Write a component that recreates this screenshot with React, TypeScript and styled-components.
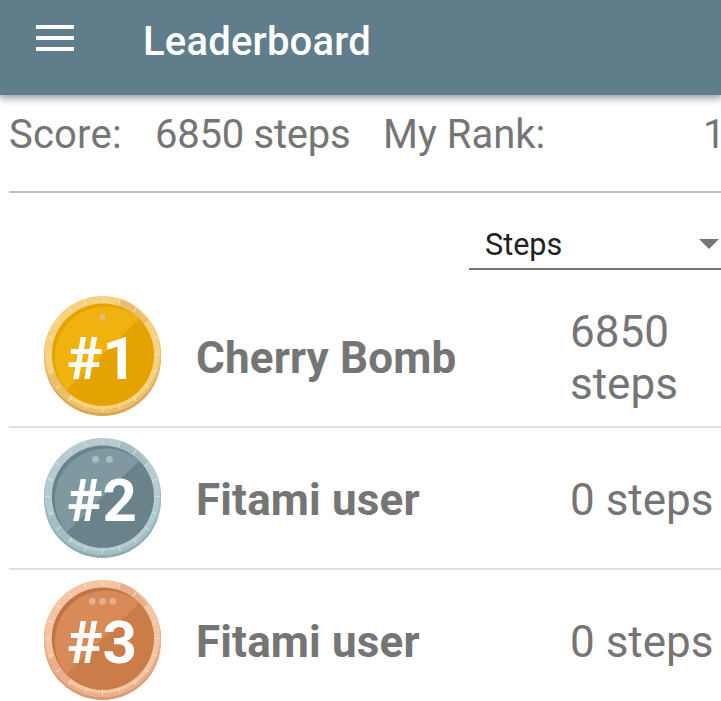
import React from "react";
import styled, { createGlobalStyle } from "styled-components";

const Global = createGlobalStyle`
  * { box-sizing: border-box; }
  html, body { margin: 0; background: #fff; overflow: hidden; }
  body { font-family: Roboto, sans-serif; color: #757575; }
`;

const Screen = styled.div`
  width: 721px;
  height: 701px;
  overflow: hidden;
  background: #fff;
`;

const AppBar = styled.header`
  display: flex;
  align-items: center;
  height: 95px;
  padding: 0 0 12px 36px;
  background: #607d8b;
  box-shadow: 0 2px 8px 1px rgba(0, 0, 0, 0.42);
`;

const MenuIcon = styled.svg`
  display: block;
  width: 38px;
  height: 26px;
  margin-top: -7px;
`;

const Title = styled.h1`
  margin: 0 0 0 69px;
  color: #fff;
  font-size: 40px;
  font-weight: 500;
  line-height: 48px;
  letter-spacing: 0.2px;
  white-space: nowrap;
`;

const Summary = styled.section`
  display: grid;
  grid-template-columns: 146px 228px 320px auto;
  height: 98px;
  margin-left: 9px;
  padding-top: 16px;
  border-bottom: 2px solid #bdbdbd;
  font-size: 40px;
  line-height: 48px;
  white-space: nowrap;
`;

const Stat = styled.span<{ $tracking?: number }>`
  letter-spacing: ${(p) => p.$tracking ?? 0}px;
`;

const FilterBar = styled.div`
  display: flex;
  justify-content: flex-end;
  height: 93px;
  padding-top: 27px;
`;

const Select = styled.div`
  display: flex;
  align-items: center;
  justify-content: space-between;
  width: 252px;
  height: 50px;
  padding: 0 2px 0 16px;
  border-bottom: 2px solid #757575;
  color: #212121;
  font-size: 32px;
`;

const SelectValue = styled.span`
  transform: scaleX(0.955);
  transform-origin: left center;
`;

const List = styled.ol`
  margin: 0 0 0 9px;
  padding: 0;
  list-style: none;
`;

const Row = styled.li`
  display: grid;
  grid-template-columns: 187px 374px 1fr;
  align-items: center;
  height: 142px;
  border-bottom: 2px solid #e0e0e0;
  font-size: 44px;
  line-height: 52px;
`;

const MedalArt = styled.svg`
  display: block;
  width: 118px;
  height: 120px;
  margin-left: 35px;
`;

const Name = styled.span`
  padding-top: 4px;
  font-weight: 700;
  letter-spacing: 0.15px;
  white-space: nowrap;
`;

const Steps = styled.span`
  padding-top: 4px;
`;

type Tone = {
  ring: string;
  ringShade: string;
  edge: string;
  rim: string;
  face: string;
  faceShade: string;
  notch: string;
};

const tones: Tone[] = [
  { ring: "#f6d280", ringShade: "#eabe6b", edge: "#d9a650", rim: "#e4a300", face: "#efb20e", faceShade: "#e4a300", notch: "#fbe3a4" },
  { ring: "#b5cbcf", ringShade: "#a3bfc3", edge: "#8eadb1", rim: "#6a838a", face: "#80989f", faceShade: "#6a838a", notch: "#cfe3e6" },
  { ring: "#f5c5a3", ringShade: "#e9af8a", edge: "#d99a74", rim: "#bf7445", face: "#d88b58", faceShade: "#ca7d48", notch: "#fcdcc5" },
];

const dotPositions = [[58.5], [51.5, 65.5], [48.3, 58.5, 68.8]];
const notchAngles = Array.from({ length: 20 }, (_, i) => i * 18);

function Medal({ rank }: { rank: number }) {
  const t = tones[rank - 1];
  const id = `medal${rank}`;
  return (
    <MedalArt viewBox="0 0 118 120">
      <defs>
        <clipPath id={`${id}-ring`}><circle cx="58.5" cy="58.5" r="58.5" /></clipPath>
        <clipPath id={`${id}-inner`}><circle cx="58.8" cy="58.6" r="51" /></clipPath>
      </defs>
      <circle cx="58.5" cy="61.5" r="58.5" fill={t.edge} />
      <circle cx="58.5" cy="58.5" r="58.5" fill={t.ring} />
      <g clipPath={`url(#${id}-ring)`} fill={t.ringShade}>
        <path d="M-5 86L10 76L28 98L12 112Z" />
        <path d="M72 8L80 0L105 25L96 30Z" />
        <path fillRule="evenodd" d="M-5 -5H125V125H-5ZM58.5 -1.5a57.5 57.5 0 1 0 .01 0Z" />
      </g>
      {notchAngles.map((a) => (
        <path key={a} d="M58.5 1.2V6.5" transform={`rotate(${a} 58.5 58.5)`} stroke={t.notch} strokeWidth="1" />
      ))}
      <circle cx="58.8" cy="58.6" r="51" fill={t.rim} />
      <g clipPath={`url(#${id}-inner)`}>
        <circle cx="61.8" cy="61.5" r="51" fill={t.face} />
        <path d="M12 104.5L105 13L130 50L100 130L30 130Z" fill={t.faceShade} />
      </g>
      {dotPositions[rank - 1].map((x) => (
        <g key={x}>
          <circle cx={x} cy="21.7" r="3.6" fill={t.edge} />
          <circle cx={x} cy="21.2" r="3.2" fill={t.ringShade} />
        </g>
      ))}
      <text x="23" y="82.7" fill="#fff" fontFamily="Roboto, sans-serif" fontSize="60" fontWeight="700">#{rank}</text>
    </MedalArt>
  );
}

const entries = [
  { name: "Cherry Bomb", steps: "6850 steps" },
  { name: "Fitami user", steps: "0 steps" },
  { name: "Fitami user", steps: "0 steps" },
];

export default function App() {
  return (
    <Screen>
      <Global />
      <AppBar>
        <MenuIcon viewBox="0 0 38 26" fill="#fff">
          <path d="M0 0h38v4H0zM0 11h38v4H0zM0 22h38v4H0z" />
        </MenuIcon>
        <Title>Leaderboard</Title>
      </AppBar>
      <Summary>
        <Stat $tracking={0.2}>Score:</Stat>
        <Stat $tracking={-0.25}>6850 steps</Stat>
        <Stat>My Rank:</Stat>
        <Stat>1</Stat>
      </Summary>
      <FilterBar>
        <Select>
          <SelectValue>Steps</SelectValue>
          <svg width="20" height="10" viewBox="0 0 20 10" fill="#757575"><path d="M0 0h20L10 10z" /></svg>
        </Select>
      </FilterBar>
      <List>
        {entries.map((e, i) => (
          <Row key={i}>
            <Medal rank={i + 1} />
            <Name>{e.name}</Name>
            <Steps>{e.steps}</Steps>
          </Row>
        ))}
      </List>
    </Screen>
  );
}
